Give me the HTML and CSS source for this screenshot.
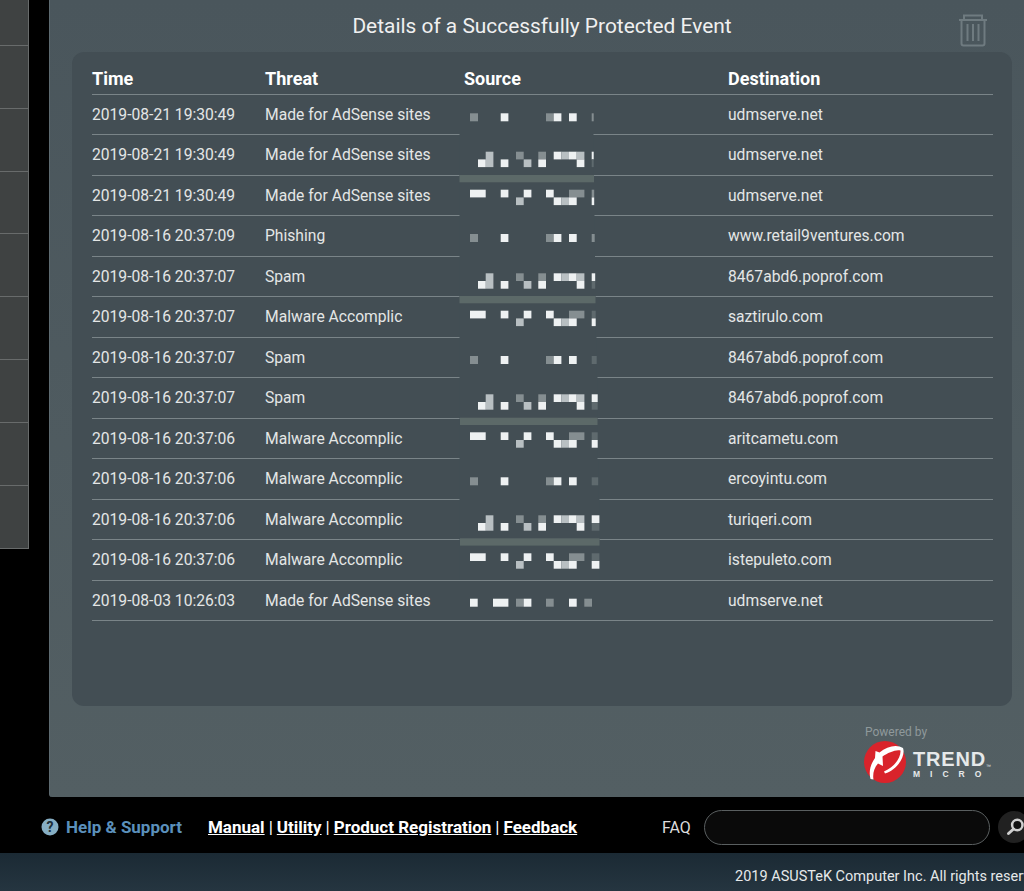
FILE: index.html
```html
<!DOCTYPE html>
<html lang="en">
<head>
<meta charset="utf-8">
<title>Details of a Successfully Protected Event</title>
<link rel="stylesheet" href="styles.css">
</head>
<body>
<div class="page">
  <div class="top">
    <nav class="side">
      <div class="side-row first"></div>
      <div class="side-row"></div>
      <div class="side-row"></div>
      <div class="side-row"></div>
      <div class="side-row"></div>
      <div class="side-row"></div>
      <div class="side-row"></div>
      <div class="side-row"></div>
      <div class="side-row"></div>
    </nav>
    <main class="panel">
      <svg class="trash" viewBox="0 0 30 34" width="30" height="34">
        <path d="M1 7h28M6 7V2.500h18V7M3.500 7v23.500q0 2 2 2h19q2 0 2-2V7M9.500 11v17M15 11v17M20.500 11v17"/>
      </svg>
      <h1 class="title">Details of a Successfully Protected Event</h1>
      <section class="card">
        <div class="row head"><span>Time</span><span>Threat</span><span>Source</span><span>Destination</span></div>
        <div class="row"><span>2019-08-21 19:30:49</span><span>Made for AdSense sites</span><span></span><span>udmserve.net</span></div>
        <div class="row"><span>2019-08-21 19:30:49</span><span>Made for AdSense sites</span><span></span><span>udmserve.net</span></div>
        <div class="row"><span>2019-08-21 19:30:49</span><span>Made for AdSense sites</span><span></span><span>udmserve.net</span></div>
        <div class="row"><span>2019-08-16 20:37:09</span><span>Phishing</span><span></span><span>www.retail9ventures.com</span></div>
        <div class="row"><span>2019-08-16 20:37:07</span><span>Spam</span><span></span><span>8467abd6.poprof.com</span></div>
        <div class="row"><span>2019-08-16 20:37:07</span><span>Malware Accomplic</span><span></span><span>saztirulo.com</span></div>
        <div class="row"><span>2019-08-16 20:37:07</span><span>Spam</span><span></span><span>8467abd6.poprof.com</span></div>
        <div class="row"><span>2019-08-16 20:37:07</span><span>Spam</span><span></span><span>8467abd6.poprof.com</span></div>
        <div class="row"><span>2019-08-16 20:37:06</span><span>Malware Accomplic</span><span></span><span>aritcametu.com</span></div>
        <div class="row"><span>2019-08-16 20:37:06</span><span>Malware Accomplic</span><span></span><span>ercoyintu.com</span></div>
        <div class="row"><span>2019-08-16 20:37:06</span><span>Malware Accomplic</span><span></span><span>turiqeri.com</span></div>
        <div class="row"><span>2019-08-16 20:37:06</span><span>Malware Accomplic</span><span></span><span>istepuleto.com</span></div>
        <div class="row"><span>2019-08-03 10:26:03</span><span>Made for AdSense sites</span><span></span><span>udmserve.net</span></div>
        <svg class="pixels" viewBox="0 0 160 540" width="160" height="540">
          <defs>
            <g id="pa">
              <rect class="p3" x="20" width="8" height="8"/>
              <rect class="p1" x="50.700" width="7.700" height="8"/>
              <rect class="p3" x="96" width="7.700" height="8"/>
              <rect class="p1" x="103.700" width="7.700" height="8"/>
              <rect class="p1" x="119" width="7.700" height="8"/>
            </g>
            <g id="pb">
              <rect class="p2" x="35.700" width="7.700" height="15.400"/>
              <rect class="p3" x="66" width="7.700" height="7.700"/>
              <rect class="p3" x="88.300" width="7.700" height="7.700"/>
              <rect class="p1" x="103.700" width="7.700" height="7.700"/>
              <rect class="p2" x="111.400" width="7.700" height="7.700"/>
              <rect class="p1" x="119" width="7.700" height="7.700"/>
              <rect class="p2" x="126.700" width="7.700" height="7.700"/>
              <rect class="p1" x="28" y="7.700" width="7.700" height="7.700"/>
              <rect class="p1" x="50.700" y="7.700" width="7.700" height="7.700"/>
              <rect class="p2" x="73.700" y="7.700" width="7.700" height="7.700"/>
              <rect class="p1" x="88.300" y="7.700" width="7.700" height="7.700"/>
              <rect class="p1" x="126.700" y="7.700" width="7.700" height="7.700"/>
            </g>
            <g id="pc">
              <rect class="p1" x="20" width="15.700" height="7.700"/>
              <rect class="p1" x="50.700" width="7.700" height="7.700"/>
              <rect class="p1" x="73.700" width="7.700" height="7.700"/>
              <rect class="p1" x="96" width="7.700" height="7.700"/>
              <rect class="p3" x="119" width="15.400" height="7.700"/>
              <rect class="p2" x="66" y="7.700" width="7.700" height="7.700"/>
              <rect class="p1" x="103.700" y="7.700" width="7.700" height="7.700"/>
              <rect class="p2" x="111.400" y="7.700" width="7.700" height="7.700"/>
              <rect class="p1" x="119" y="7.700" width="7.700" height="7.700"/>
            </g>
          </defs>
          <rect class="cover" x="9.500" y="39" width="134" height="40"/>
          <rect class="cover" x="9.500" y="80" width="134.500" height="40"/>
          <rect class="cover" x="9.500" y="120" width="135" height="41"/>
          <rect class="cover" x="9.500" y="161" width="135.500" height="40"/>
          <rect class="cover" x="9.500" y="201" width="136" height="41"/>
          <rect class="cover" x="9.500" y="242" width="137" height="40"/>
          <rect class="cover" x="9.500" y="282" width="138" height="41"/>
          <rect class="cover" x="9.500" y="323" width="138" height="41"/>
          <rect class="cover" x="9.500" y="364" width="139" height="40"/>
          <rect class="cover" x="9.500" y="404" width="140" height="41"/>
          <rect class="cover" x="9.500" y="445" width="140" height="40"/>
          <rect class="band" x="9.500" y="80" width="134.500" height="7.300"/>
          <rect class="band" x="9.500" y="201" width="136" height="7.300"/>
          <rect class="band" x="10" y="322.700" width="137.500" height="7.300"/>
          <rect class="band" x="10" y="443.300" width="139.500" height="7.300"/>
          <use href="#pa" y="18.300"/>
          <use href="#pb" y="56.700"/>
          <use href="#pc" y="94.700"/>
          <use href="#pa" y="139"/>
          <use href="#pb" y="178.300"/>
          <use href="#pc" y="215.700"/>
          <use href="#pa" y="261"/>
          <use href="#pb" y="299.300"/>
          <use href="#pc" y="337.300"/>
          <use href="#pa" y="382.300"/>
          <use href="#pb" y="420.300"/>
          <use href="#pc" y="458.300"/>
          <g transform="translate(0 503.700)">
            <rect class="p1" x="20" width="7.700" height="8"/>
            <rect class="p1" x="43" width="15.400" height="8"/>
            <rect class="p3" x="66" width="7.700" height="8"/>
            <rect class="p1" x="73.700" width="7.700" height="8"/>
            <rect class="p3" x="96" width="7.700" height="8"/>
            <rect class="p1" x="119" width="7.700" height="8"/>
            <rect class="p3" x="134.300" width="7.700" height="8"/>
          </g>
          <rect class="p3" x="141.700" y="18.300" width="2" height="8"/>
          <rect class="p1" x="141.700" y="56.700" width="2" height="7.700"/>
          <rect class="p4" x="141.700" y="64.400" width="2" height="7.700"/>
          <rect class="p3" x="141.700" y="94.700" width="2.500" height="7.700"/>
          <rect class="p1" x="141.700" y="102.400" width="2.500" height="7.700"/>
          <rect class="p3" x="141.700" y="139" width="3" height="8"/>
          <rect class="p1" x="141.700" y="178.300" width="3.500" height="7.700"/>
          <rect class="p4" x="141.700" y="186" width="3.500" height="7.700"/>
          <rect class="p4" x="141.700" y="215.700" width="4" height="7.700"/>
          <rect class="p1" x="141.700" y="223.400" width="4" height="7.700"/>
          <rect class="p4" x="141.700" y="261" width="5" height="8"/>
          <rect class="p1" x="141.700" y="299.300" width="6" height="7.700"/>
          <rect class="p4" x="141.700" y="307" width="6" height="7.700"/>
          <rect class="p4" x="141.700" y="337.300" width="6" height="7.700"/>
          <rect class="p1" x="141.700" y="345" width="6" height="7.700"/>
          <rect class="p4" x="141.700" y="382.300" width="6.500" height="8"/>
          <rect class="p1" x="141.700" y="420.300" width="7.700" height="7.700"/>
          <rect class="p4" x="141.700" y="428" width="7.700" height="7.700"/>
          <rect class="p4" x="141.700" y="458.300" width="7.700" height="7.700"/>
          <rect class="p1" x="141.700" y="466" width="7.700" height="7.700"/>
        </svg>
      </section>
      <div class="brand">
        <div class="powered">Powered by</div>
        <div class="logo">
          <svg class="ball" viewBox="0 0 42 42" width="42" height="42">
            <circle class="ball-red" cx="21" cy="21" r="21"/>
            <path class="ball-white" d="M39 7C33 3 23 5 15.500 11.500L11.500 10L11 17C6.500 23 4.500 31 6.500 38L9.500 38.500C8.500 33 10 27 14 22.500L19 25L18.500 15.500C24 11.500 32.500 8 36.500 9.500C37 16 31 26 20 30.500L21 32.500C33 29 42 15 39 7z"/>
          </svg>
          <div class="wordmark">
            <div class="trend">TREND<span class="tm">™</span></div>
            <div class="micro">MICRO</div>
          </div>
        </div>
      </div>
    </main>
  </div>
  <footer class="foot">
    <svg class="help-icon" viewBox="0 0 18 18" width="18" height="18">
      <circle class="help-disc" cx="9" cy="9" r="8.500"/>
      <text class="help-q" x="9" y="13.500" text-anchor="middle">?</text>
    </svg>
    <a class="help">Help &amp; Support</a>
    <div class="links">
      <a>Manual</a><span class="sep">|</span><a>Utility</a><span class="sep">|</span><a>Product Registration</a><span class="sep">|</span><a>Feedback</a>
    </div>
    <span class="faq">FAQ</span>
    <input class="search" type="text" aria-label="FAQ">
    <button class="go" aria-label="Search">
      <svg viewBox="0 0 32 32" width="32" height="32">
        <circle class="lens" cx="19.300" cy="14" r="5.200"/>
        <path class="handle" d="M15.500 18L10.500 22.500"/>
      </svg>
    </button>
  </footer>
  <div class="copy">2019 ASUSTeK Computer Inc. All rights reserved.</div>
</div>
</body>
</html>
```

FILE: styles.css
```css
* { box-sizing: border-box; }
html, body { margin: 0; height: 100%; background: #000; overflow: hidden; }
body { font-family: Roboto, "Liberation Sans", sans-serif; }
.page { width: 1024px; height: 891px; display: flex; flex-direction: column; overflow: hidden; }
.top { height: 797px; display: flex; align-items: flex-start; }

.side { width: 29px; margin-right: 20px; flex: none; display: flex; flex-direction: column; background: #3f4242; border-right: 1px solid #686b6b; border-bottom: 1px solid #686b6b; }
.side-row { height: 62.800px; border-bottom: 1px solid #686b6b; }
.side-row.first { height: 46px; }
.side-row:last-child { border-bottom: 0; }

.panel { position: relative; flex: 1; height: 797px; padding: 0 12px 0 22px; background: linear-gradient(#4a565c, #535f63); border-left: 1px solid #5d6a70; border-radius: 0 0 0 3px; }
.title { margin: 0; height: 52px; padding-top: 13px; font-size: 20.900px; line-height: 26px; font-weight: 400; text-align: center; color: #f0f0f0; }
.trash { position: absolute; left: 908px; top: 13px; fill: none; stroke: #6f7b80; stroke-width: 2; }

.card { position: relative; height: 654px; padding: 0 19px 0 20px; background: #434e54; border-radius: 12px; }
.row { display: grid; grid-template-columns: 173px 199px 264px 1fr; height: 40.500px; padding-top: 10.300px; border-bottom: 1px solid #7a8488; font-size: 15.650px; line-height: 20px; color: #e4e6e6; }
.row.head { height: 42.500px; padding-top: 17px; font-size: 18px; font-weight: 700; color: #fff; }

.pixels { position: absolute; left: 378px; top: 43px; }
.cover { fill: #434e54; }
.band { fill: #5c6968; }
.p1 { fill: #eef1f2; }
.p2 { fill: #b8bfc2; }
.p3 { fill: #858e91; }
.p4 { fill: #5f6a6e; }

.brand { margin: 19px 0 0 793px; width: 130px; }
.powered { font-size: 12px; line-height: 14px; color: #8f999b; }
.logo { display: flex; align-items: flex-start; margin: 2px 0 0 -1px; }
.ball-red { fill: #d9232b; }
.ball-white { fill: #fff; }
.wordmark { margin-left: 7px; padding-top: 8px; color: #e6e9ea; font-weight: 700; font-family: "Liberation Sans", sans-serif; }
.trend { font-size: 20px; line-height: 21px; height: 21px; letter-spacing: 0.800px; white-space: nowrap; }
.micro { font-size: 8.500px; line-height: 9px; letter-spacing: 10px; white-space: nowrap; }
.tm { font-size: 5px; line-height: 0; letter-spacing: 0; font-weight: 400; vertical-align: -2px; }

.foot { height: 56px; flex: none; display: flex; align-items: center; padding: 4px 0 0 41px; background: #000; }
.help-icon { flex: none; }
.help-disc { fill: #86aec4; }
.help-q { font-size: 14px; font-weight: 700; fill: #1d2e38; font-family: Roboto, sans-serif; }
.help { margin-left: 7px; font-size: 17px; font-weight: 700; color: #5b90bb; white-space: nowrap; }
.links { margin-left: 26px; width: 454px; flex: none; font-size: 17px; font-weight: 700; color: #fff; white-space: nowrap; }
.links a { text-decoration: underline; }
.sep { margin: 0 4px; font-weight: 400; }
.faq { font-size: 16px; color: #dcdcdc; width: 42px; flex: none; }
.search { width: 286px; height: 35px; flex: none; background: #0a0a0a; border: 1px solid #5a5f60; border-radius: 18px; outline: 0; }
.go { width: 32px; height: 32px; flex: none; margin-left: 8px; padding: 0; background: #212121; border: 0; border-radius: 50%; }
.go svg { display: block; }
.lens { fill: #111; stroke: #cfcfcf; stroke-width: 2.500; }
.handle { fill: none; stroke: #cfcfcf; stroke-width: 3; stroke-linecap: round; }

.copy { height: 38px; flex: none; padding: 15px 0 0 735px; font-size: 14.500px; line-height: 18px; color: #e6e9ea; white-space: nowrap; overflow: hidden; background: linear-gradient(#1b2a34, #253540); }
```
